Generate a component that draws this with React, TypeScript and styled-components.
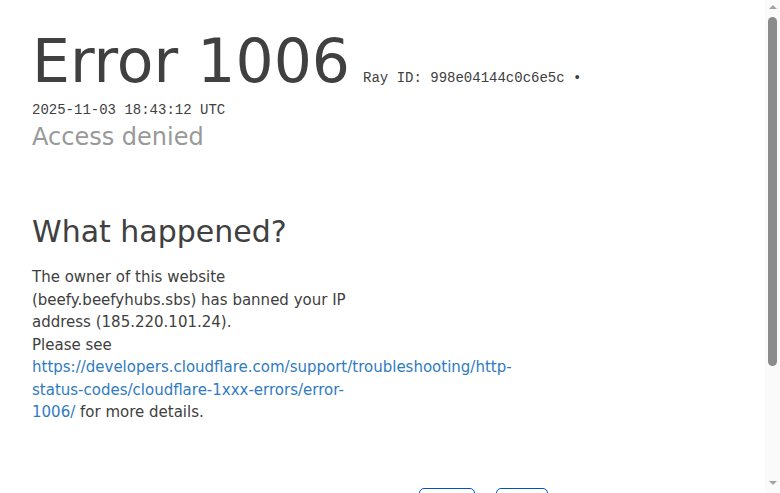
import React from "react";
import styled, { createGlobalStyle } from "styled-components";

const Global = createGlobalStyle`
  html, body { margin: 0; padding: 0; background: #ffffff; height: 100%; overflow: hidden; }
  #root { height: 100%; }
  body {
    font-family: "DejaVu Sans", sans-serif;
    color: #404040;
  }
  * { box-sizing: border-box; }
`;

const Window = styled.div`
  display: flex;
  height: 100vh;
  overflow: hidden;
`;

const Main = styled.main`
  flex: 1;
  min-width: 0;
  overflow: hidden;
`;

const Scrollbar = styled.div`
  width: 15px;
  flex: none;
  display: flex;
  flex-direction: column;
  background: #fafafa;
`;

const Arrow = styled.div<{ $dir: "up" | "down" }>`
  height: 15px;
  display: flex;
  justify-content: center;
  align-items: ${(p) => (p.$dir === "up" ? "flex-start" : "flex-end")};
  padding: ${(p) => (p.$dir === "up" ? "5px 0 0 0" : "0 0 8px 0")};
  &::before {
    content: "";
    width: 0;
    height: 0;
    border-left: 4px solid transparent;
    border-right: 4px solid transparent;
    ${(p) =>
      p.$dir === "up"
        ? "border-bottom: 4px solid #a3a3a3;"
        : "border-top: 4px solid #a3a3a3;"}
  }
`;

const Track = styled.div`
  flex: 1;
  display: flex;
  flex-direction: column;
  padding: 2px 3px 0 3px;
`;

const Thumb = styled.div`
  height: 349px;
  border-radius: 5px;
  background: #8b8b8b;
`;

const Page = styled.div`
  display: flex;
  flex-direction: column;
  padding: 31px 32px 20px 32px;
`;

const Header = styled.header`
  display: flex;
  flex-direction: column;
`;

const TitleRow = styled.div`
  display: flex;
  align-items: baseline;
`;

const Title = styled.h1`
  margin: 0;
  font-size: 60px;
  line-height: 60px;
  font-weight: 400;
  color: #404040;
  white-space: nowrap;
`;

const Mono = styled.span<{ $top?: number }>`
  font-family: "Liberation Mono", monospace;
  font-size: 14px;
  line-height: 20px;
  color: #404040;
  white-space: nowrap;
  margin-top: ${(p) => p.$top ?? 0}px;
`;

const RayId = styled(Mono)`
  margin-left: 13px;
`;

const DateLine = styled(Mono)`
  display: block;
`;

const Subhead = styled.h2`
  margin: 2px 0 0 0;
  font-size: 24px;
  line-height: 30px;
  font-weight: 400;
  color: #999999;
`;

const Section = styled.section`
  display: flex;
  flex-direction: column;
  margin-top: 62px;
`;

const SectionTitle = styled.h2`
  margin: 0;
  font-size: 30px;
  line-height: 36px;
  font-weight: 400;
  color: #404040;
`;

const Paragraph = styled.p`
  margin: 16px 0 0 0;
  max-width: 340px;
  font-size: 15px;
  line-height: 22.5px;
  color: #404040;
`;

const Link = styled.a`
  color: #2f7bbf;
  text-decoration: none;
`;

const Feedback = styled.div`
  display: flex;
  align-items: center;
  justify-content: center;
  margin: 64px -32px 0 -32px;
  gap: 33px;
`;

const FeedbackText = styled.span`
  font-size: 15px;
  line-height: 22px;
`;

const ButtonGroup = styled.div`
  display: flex;
  gap: 21px;
`;

const FeedbackButton = styled.button`
  font-family: "DejaVu Sans", sans-serif;
  font-size: 14px;
  line-height: 20px;
  padding: 5px 15.5px;
  color: #0051c3;
  background: #ffffff;
  border: 1px solid #0051c3;
  border-radius: 5px;
`;

const Footer = styled.footer`
  margin-top: 40px;
  padding: 16px 0;
  border-top: 1px solid #dedede;
  font-size: 13px;
  line-height: 22px;
  text-align: center;
  color: #404040;
`;

export default function App() {
  return (
    <>
      <Global />
      <Window>
        <Main>
          <Page>
            <Header>
              <TitleRow>
                <Title>Error 1006</Title>
                <RayId>Ray ID: 998e04144c0c6e5c •</RayId>
              </TitleRow>
              <DateLine $top={9}>2025-11-03 18:43:12 UTC</DateLine>
              <Subhead>Access denied</Subhead>
            </Header>
            <Section>
              <SectionTitle>What happened?</SectionTitle>
              <Paragraph>
                The owner of this website (beefy.beefyhubs.sbs) has banned your
                IP address (185.220.101.24).
                <br />
                Please see{" "}
                <Link href="#">
                  https://developers.cloudflare.com/support/troubleshooting/http-status-codes/cloudflare-1xxx-errors/error-1006/
                </Link>{" "}
                for more details.
              </Paragraph>
            </Section>
            <Feedback>
              <FeedbackText>Was this page helpful?</FeedbackText>
              <ButtonGroup>
                <FeedbackButton>Yes</FeedbackButton>
                <FeedbackButton>No</FeedbackButton>
              </ButtonGroup>
            </Feedback>
            <Footer>
              Cloudflare Ray ID: 998e04144c0c6e5c • Your IP: Click to reveal
              <br />
              Performance &amp; security by Cloudflare
            </Footer>
          </Page>
        </Main>
        <Scrollbar aria-hidden="true">
          <Arrow $dir="up" />
          <Track>
            <Thumb />
          </Track>
          <Arrow $dir="down" />
        </Scrollbar>
      </Window>
    </>
  );
}
